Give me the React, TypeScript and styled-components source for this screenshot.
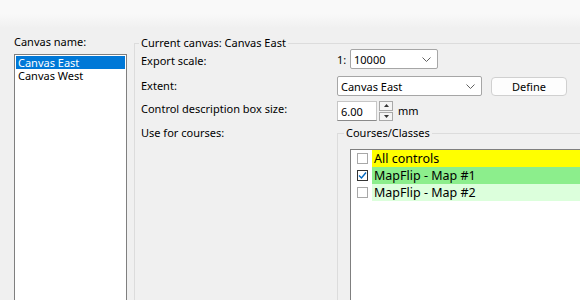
import React from "react";
import styled, { createGlobalStyle } from "styled-components";

const Global = createGlobalStyle`
  html, body { margin: 0; padding: 0; background: #f0f0f0; }
  body { font-family: "Noto Sans", "Segoe UI", sans-serif; font-size: 11px; color: #000; }
  * { box-sizing: border-box; }
`;

const Window = styled.div`
  width: 580px;
  height: 300px;
  overflow: hidden;
  background: #f0f0f0;
  display: flex;
  flex-direction: column;
`;

const TopBand = styled.div`
  height: 35px;
  flex: none;
  background: linear-gradient(#f9f9f9 0px, #f9f9f9 14px, #f0f0f0 28px);
`;

const Body = styled.div`
  display: flex;
  gap: 7px;
  padding-left: 14px;
  flex: 1;
`;

const LeftCol = styled.div`
  width: 113px;
  flex: none;
  display: flex;
  flex-direction: column;
`;

const FieldLabel = styled.div`
  line-height: 13px;
  height: 13px;
  white-space: nowrap;
  margin-bottom: 6px;
`;

const ListBox = styled.div`
  flex: 1;
  background: #fff;
  border: 1px solid #7f7f7f;
  border-bottom: none;
  padding: 1px;
`;

const ListItem = styled.div<{ $selected?: boolean }>`
  height: 13px;
  line-height: 13px;
  overflow: hidden;
  padding-left: 2px;
  white-space: nowrap;
  background: ${(p) => (p.$selected ? "#0078d7" : "transparent")};
  color: ${(p) => (p.$selected ? "#fff" : "#000")};
`;

const Group = styled.fieldset<{ $width: number; $padLeft: number }>`
  margin: 1px 0 0 0;
  padding: 0 0 0 ${(p) => p.$padLeft}px;
  border: 1px solid #dcdcdc;
  border-bottom: none;
  width: ${(p) => p.$width}px;
  flex: none;
  min-width: 0;
`;

const InnerGroup = styled(Group)`
  margin: 0;
`;

const Legend = styled.legend<{ $offset: number }>`
  padding: 0 2px;
  margin-left: ${(p) => p.$offset}px;
  line-height: 14px;
  white-space: nowrap;
`;

const Rows = styled.div`
  display: flex;
  flex-direction: column;
  margin-top: -1px;
`;

const Row = styled.div<{ $h: number; $gap: number }>`
  display: flex;
  height: ${(p) => p.$h}px;
  margin-top: ${(p) => p.$gap}px;
`;

const RowLabel = styled.div<{ $pad: number }>`
  width: 196px;
  flex: none;
  padding-top: ${(p) => p.$pad}px;
  line-height: 13px;
  white-space: nowrap;
`;

const Controls = styled.div`
  display: flex;
  align-items: flex-start;
  flex: 1;
`;

const Prefix = styled.span`
  width: 13px;
  line-height: 13px;
  padding-top: 4px;
`;

const Combo = styled.div<{ $w: number }>`
  width: ${(p) => p.$w}px;
  height: 20px;
  background: #fff;
  border: 1px solid #a6a6a6;
  border-radius: 2px;
  display: flex;
  align-items: center;
  justify-content: space-between;
  padding: 0 6px 0 3px;
  line-height: 13px;
`;

const Chevron = () => (
  <svg width="9" height="5" viewBox="0 0 9 5">
    <polyline points="0.5,0.5 4.5,4.5 8.5,0.5" fill="none" stroke="#606060" strokeWidth="1" />
  </svg>
);

const Button = styled.div`
  margin-left: 9px;
  margin-top: 1px;
  width: 76px;
  height: 19px;
  background: #fdfdfd;
  border: 1px solid #d0d0d0;
  border-radius: 4px;
  display: flex;
  align-items: center;
  justify-content: center;
  line-height: 13px;
`;

const NumBox = styled.div`
  width: 40px;
  height: 20px;
  background: #fff;
  border: 1px solid #c6c6c6;
  border-bottom-color: #8a8a8a;
  padding-left: 3px;
  display: flex;
  align-items: center;
  line-height: 13px;
`;

const Spinner = styled.div`
  margin-left: 2px;
  width: 14px;
  height: 20px;
  display: flex;
  flex-direction: column;
  gap: 1px;
`;

const SpinBtn = styled.div`
  flex: 1;
  border: 1px solid #a8a8a8;
  background: #f4f4f4;
  display: flex;
  align-items: center;
  justify-content: center;
`;

const Unit = styled.span`
  margin-left: 5px;
  padding-top: 3px;
  line-height: 13px;
`;

const CheckList = styled.div`
  margin-top: 9px;
  width: 300px;
  height: 200px;
  background: #fff;
  border: 1px solid #7f7f7f;
`;

const CheckRow = styled.div`
  display: flex;
  align-items: center;
  height: 17px;
  padding-left: 6px;
`;

const Box = styled.div<{ $checked?: boolean }>`
  width: 11px;
  height: 11px;
  flex: none;
  border: 1px solid ${(p) => (p.$checked ? "#333" : "#a8a8a8")};
  background: #fff;
  display: flex;
  align-items: center;
  justify-content: center;
`;

const Swatch = styled.div<{ $bg: string }>`
  margin-left: 4px;
  flex: 1;
  height: 17px;
  background: ${(p) => p.$bg};
  padding-left: 2px;
  display: flex;
  align-items: center;
  font-size: 12.5px;
  white-space: nowrap;
`;

const Check = () => (
  <svg width="9" height="9" viewBox="0 0 9 9">
    <polyline points="1,4.5 3.5,7 8,1.5" fill="none" stroke="#0067c0" strokeWidth="1.4" />
  </svg>
);

const Tri = ({ up }: { up?: boolean }) => (
  <svg width="5" height="3" viewBox="0 0 5 3">
    <polygon points={up ? "0,3 5,3 2.5,0" : "0,0 5,0 2.5,3"} fill="#333" />
  </svg>
);

const courses = [
  { name: "All controls", bg: "#ffff00", checked: false },
  { name: "MapFlip - Map #1", bg: "#8cee8c", checked: true },
  { name: "MapFlip - Map #2", bg: "#dcffdc", checked: false },
];

export default function App() {
  return (
    <>
      <Global />
      <Window>
        <TopBand />
        <Body>
          <LeftCol>
            <FieldLabel>Canvas name:</FieldLabel>
            <ListBox>
              <ListItem $selected>Canvas East</ListItem>
              <ListItem>Canvas West</ListItem>
            </ListBox>
          </LeftCol>
          <Group $width={520} $padLeft={6}>
            <Legend $offset={-2}>Current canvas: Canvas East</Legend>
            <Rows>
              <Row $h={20} $gap={0}>
                <RowLabel $pad={5}>Export scale:</RowLabel>
                <Controls>
                  <Prefix>1:</Prefix>
                  <Combo $w={88}>
                    <span>10000</span>
                    <Chevron />
                  </Combo>
                </Controls>
              </Row>
              <Row $h={20} $gap={7}>
                <RowLabel $pad={3}>Extent:</RowLabel>
                <Controls>
                  <Combo $w={145}>
                    <span>Canvas East</span>
                    <Chevron />
                  </Combo>
                  <Button>Define</Button>
                </Controls>
              </Row>
              <Row $h={20} $gap={5}>
                <RowLabel $pad={1}>Control description box size:</RowLabel>
                <Controls>
                  <NumBox>6.00</NumBox>
                  <Spinner>
                    <SpinBtn>
                      <Tri up />
                    </SpinBtn>
                    <SpinBtn>
                      <Tri />
                    </SpinBtn>
                  </Spinner>
                  <Unit>mm</Unit>
                </Controls>
              </Row>
              <Row $h={200} $gap={5}>
                <RowLabel $pad={0}>Use for courses:</RowLabel>
                <Controls>
                  <InnerGroup $width={300} $padLeft={12}>
                    <Legend $offset={-6}>Courses/Classes</Legend>
                    <CheckList>
                      {courses.map((c) => (
                        <CheckRow key={c.name}>
                          <Box $checked={c.checked}>{c.checked && <Check />}</Box>
                          <Swatch $bg={c.bg}>{c.name}</Swatch>
                        </CheckRow>
                      ))}
                    </CheckList>
                  </InnerGroup>
                </Controls>
              </Row>
            </Rows>
          </Group>
        </Body>
      </Window>
    </>
  );
}
